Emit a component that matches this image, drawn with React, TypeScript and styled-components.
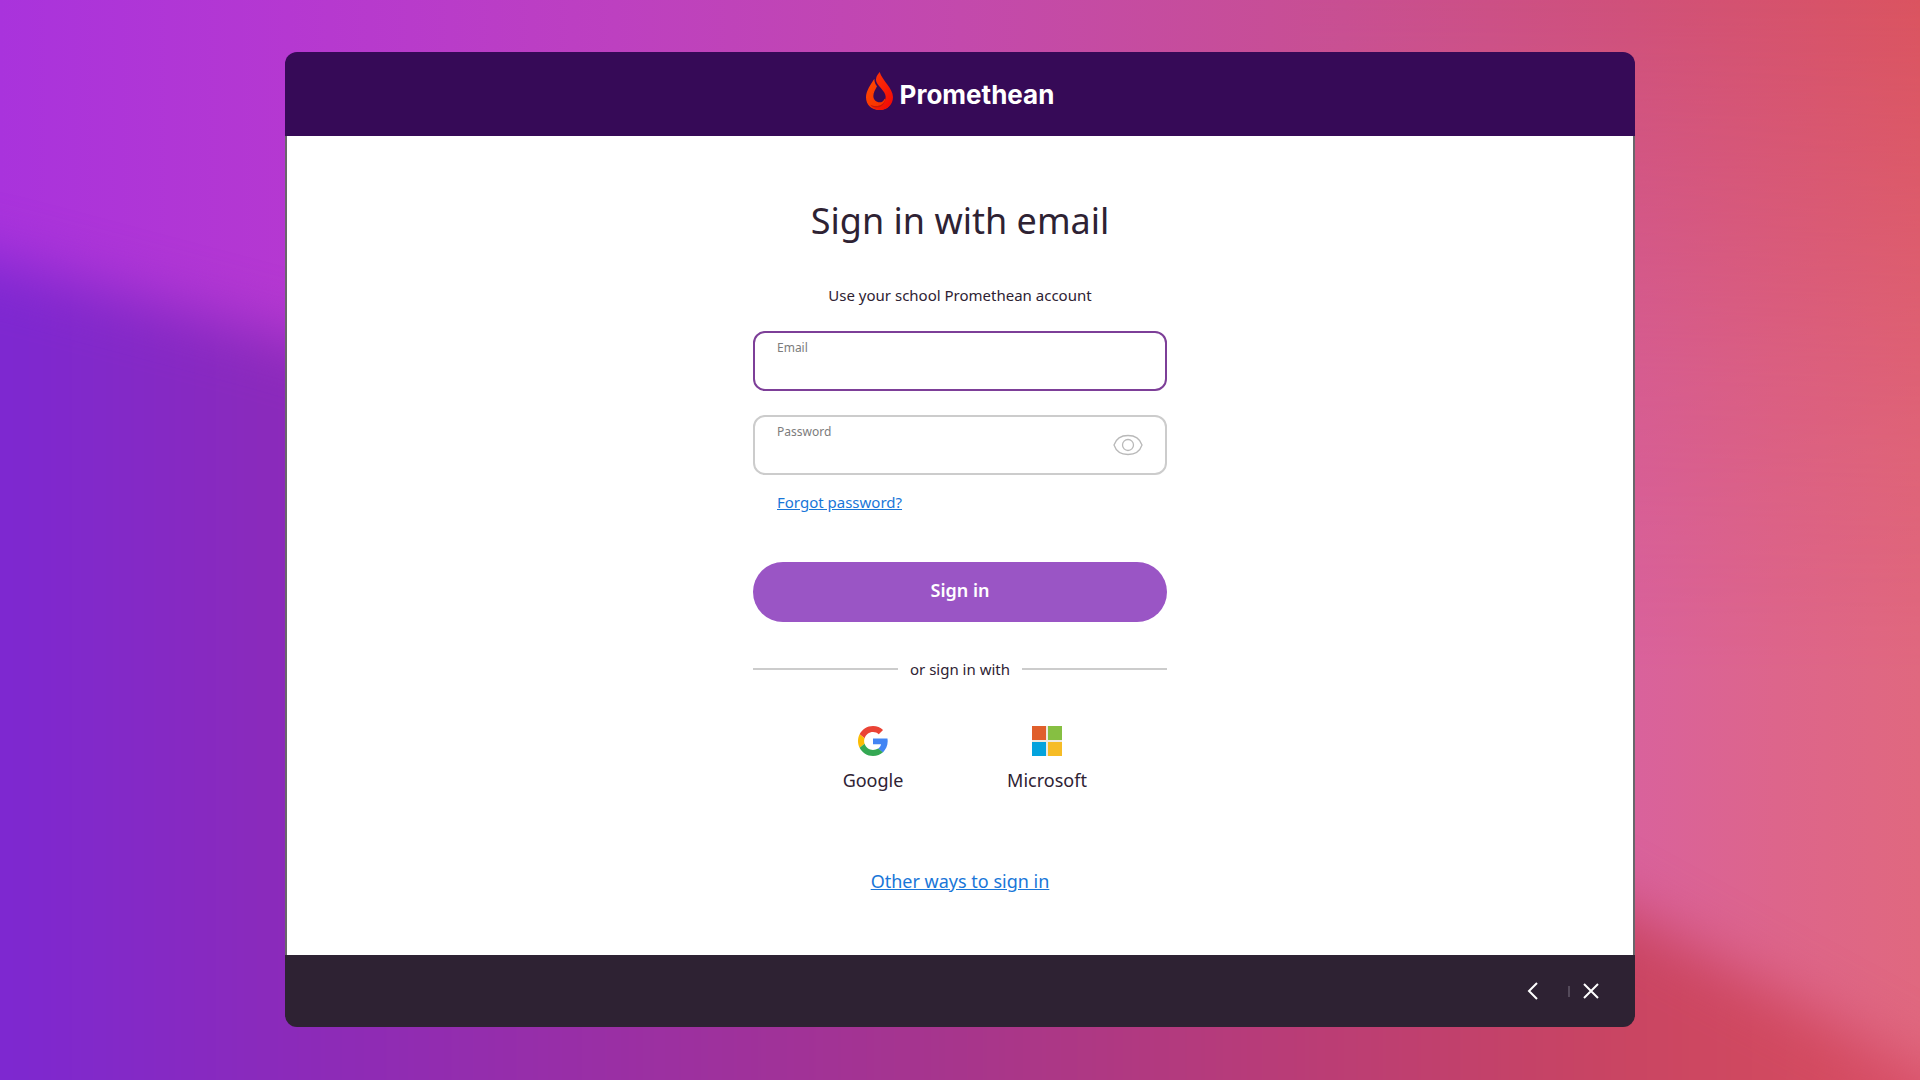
import React, { useState } from 'react';
import styled, { createGlobalStyle } from 'styled-components';

const GlobalStyle = createGlobalStyle`
  * { box-sizing: border-box; }
  body {
    margin: 0;
    font-family: 'Noto Sans', 'Open Sans', sans-serif;
    color: #2e2233;
  }
  button, input { font: inherit; }
`;

const Page = styled.div`
  position: relative;
  min-height: 100vh;
  padding: 52px 24px 53px;
  display: flex;
  justify-content: center;
  overflow: hidden;
  background: #a933dc;
`;

const Backdrop = styled.svg`
  position: absolute;
  inset: 0;
  width: 100%;
  height: 100%;
`;

const Window = styled.div`
  position: relative;
  width: 100%;
  max-width: 1350px;
  display: flex;
  flex-direction: column;
  border-radius: 12px;
  overflow: hidden;
`;

const Header = styled.header`
  height: 84px;
  padding-bottom: 6px;
  display: flex;
  align-items: center;
  justify-content: center;
  gap: 7px;
  background: #360a57;
`;

const Wordmark = styled.span`
  padding-top: 8px;
  color: #fff;
  font-family: Inter, sans-serif;
  font-size: 26px;
  font-weight: 700;
  line-height: 32px;
`;

const Main = styled.main`
  flex: 1;
  padding: 61px 24px 40px;
  display: flex;
  flex-direction: column;
  align-items: center;
  background: #fff;
  border: solid #69666b;
  border-width: 0 2px;
`;

const Title = styled.h1`
  margin: 0 0 40px;
  font-size: 36px;
  font-weight: 400;
  line-height: 48px;
`;

const Subtitle = styled.p`
  margin: 0 0 26px;
  font-size: 15px;
  line-height: 20px;
`;

const Form = styled.form`
  width: 100%;
  max-width: 414px;
  display: flex;
  flex-direction: column;
`;

const Field = styled.div`
  height: 60px;
  padding: 0 22px;
  display: flex;
  align-items: center;
  border: 2px solid #ccc;
  border-radius: 12px;
  & + & { margin-top: 24px; }
  &:focus-within { border-color: #7d3f98; }
`;

const EmailField = styled(Field)`
  border-color: #7d3f98;
`;

const FieldBody = styled.div`
  flex: 1;
  min-width: 0;
  padding-top: 6px;
  display: flex;
  flex-direction: column;
`;

const Label = styled.label`
  color: #7c7c7c;
  font-size: 12px;
  line-height: 16px;
`;

const Input = styled.input`
  width: 100%;
  height: 32px;
  padding: 0;
  border: 0;
  outline: 0;
  background: none;
  color: #2e2233;
  font-size: 18px;
`;

const IconButton = styled.button`
  padding: 0;
  display: flex;
  align-items: center;
  justify-content: center;
  border: 0;
  background: none;
  cursor: pointer;
`;

const Link = styled.a<{ $large?: boolean }>`
  color: #1976d8;
  font-size: ${(p) => (p.$large ? 18 : 15)}px;
  line-height: ${(p) => (p.$large ? 24 : 20)}px;
`;

const ForgotRow = styled.div`
  display: flex;
  padding: 17px 24px 50px;
`;

const Submit = styled.button`
  height: 60px;
  padding: 0 24px 4px;
  border: 0;
  border-radius: 30px;
  background: #9a55c5;
  color: #fff;
  font-size: 18px;
  font-weight: 600;
  line-height: 24px;
  cursor: pointer;
`;

const Divider = styled.div`
  margin: 36px 0 46px;
  display: flex;
  align-items: center;
  gap: 12px;
  font-size: 15px;
  line-height: 22px;
  &::before, &::after {
    content: '';
    flex: 1;
    height: 2px;
    background: #ccc;
  }
`;

const Providers = styled.div`
  margin-bottom: 77px;
  display: flex;
  justify-content: center;
`;

const Provider = styled.button`
  width: 174px;
  padding: 0;
  display: flex;
  flex-direction: column;
  align-items: center;
  gap: 12px;
  border: 0;
  background: none;
  color: inherit;
  font-size: 18px;
  line-height: 24px;
  cursor: pointer;
`;

const Footer = styled.footer`
  height: 72px;
  padding: 0 32px;
  display: flex;
  align-items: center;
  justify-content: flex-end;
  background: #2e2233;
`;

const FooterButton = styled(IconButton)`
  width: 24px;
  height: 24px;
`;

const Separator = styled.span`
  width: 2px;
  height: 11px;
  margin: 0 9px 0 24px;
  background: #544a5a;
`;

const Background = () => (
  <Backdrop viewBox="0 0 1920 1080" preserveAspectRatio="none" aria-hidden="true">
    <defs>
      <linearGradient id="sky">
        <stop offset="0" stopColor="#a933dc" />
        <stop offset="0.15" stopColor="#b538d1" />
        <stop offset="0.32" stopColor="#bd40c0" />
        <stop offset="0.5" stopColor="#c349ac" />
        <stop offset="0.7" stopColor="#c84f92" />
        <stop offset="0.85" stopColor="#d0517a" />
        <stop offset="1" stopColor="#db5460" />
      </linearGradient>
      <linearGradient id="glow" gradientUnits="userSpaceOnUse" x1="1635" y1="0" x2="1920" y2="0">
        <stop offset="0" stopColor="#d9629c" />
        <stop offset="0.5" stopColor="#dd658b" />
        <stop offset="1" stopColor="#e0687f" />
      </linearGradient>
      <linearGradient id="fade" x1="0" y1="0" x2="0" y2="1">
        <stop offset="0" stopColor="#000" />
        <stop offset="0.35" stopColor="#aaa" />
        <stop offset="0.62" stopColor="#fff" />
      </linearGradient>
      <mask id="glowMask">
        <rect x="1300" width="620" height="1080" fill="url(#fade)" />
      </mask>
      <linearGradient id="wave" gradientUnits="userSpaceOnUse" x1="0" y1="0" x2="1920" y2="0">
        <stop offset="0" stopColor="#7d28d1" />
        <stop offset="0.15" stopColor="#8b2aba" />
        <stop offset="0.32" stopColor="#9a2fa4" />
        <stop offset="0.5" stopColor="#a7358c" />
        <stop offset="0.67" stopColor="#b93c77" />
        <stop offset="0.83" stopColor="#c84463" />
        <stop offset="0.94" stopColor="#d24a5f" />
        <stop offset="1" stopColor="#d84e66" />
      </linearGradient>
      <filter id="soft" filterUnits="userSpaceOnUse" x="-200" y="0" width="2320" height="1300" colorInterpolationFilters="sRGB">
        <feGaussianBlur stdDeviation="28" />
      </filter>
    </defs>
    <rect width="1920" height="1080" fill="url(#sky)" />
    <rect x="1300" width="620" height="1080" fill="url(#glow)" mask="url(#glowMask)" />
    <path
      d="M-200 215 L0 262 L285 338 C700 470 1250 700 1635 915 L1920 1070 L2120 1180 V1300 H-200Z"
      fill="url(#wave)"
      filter="url(#soft)"
    />
  </Backdrop>
);

const Flame = () => (
  <svg width="27" height="38" viewBox="54 66 81 114" aria-hidden="true">
    <defs>
      <linearGradient id="flameLeft" x1="0" y1="0" x2="1" y2="1">
        <stop offset="0" stopColor="#ff4a00" />
        <stop offset="1" stopColor="#f52a00" />
      </linearGradient>
      <linearGradient id="flameRight" x1="0" y1="0" x2="1" y2="1">
        <stop offset="0" stopColor="#ff3a08" />
        <stop offset="1" stopColor="#f00505" />
      </linearGradient>
    </defs>
    <path
      d="M79 86 C68 104 54 122 54 142 C54 165 71 180 94 180 C108 180 119 175 126 164 L110 146 C107 153 101 157 95 157 C84 157 76 149 76 138 C76 128 82 119 87 109 C82 103 79 95 79 86Z"
      fill="url(#flameLeft)"
    />
    <path
      d="M95 66 C87 75 84 82 84 90 C84 106 113 122 113 140 C113 158 99 168 84 168 C77 168 71 166 67 164 C74 175 84 180 95 180 C118 180 135 164 135 141 C135 115 103 92 95 66Z"
      fill="url(#flameRight)"
    />
    <path
      d="M113 140 C113 158 99 168 84 168 C77 168 71 166 67 164 C72 171 80 173 90 172 C104 170 113 158 113 140Z"
      fill="#c81a08"
    />
  </svg>
);

const Eye = () => (
  <svg width="30" height="22" viewBox="0 0 30 22" fill="none" stroke="#b9b9b9" aria-hidden="true">
    <path d="M1 11 C3 5 8.500 1.500 15 1.500 S27 5 29 11 C27 17 21.500 20.500 15 20.500 S3 17 1 11Z" strokeWidth="1.300" />
    <circle cx="15" cy="11" r="5.500" strokeWidth="1.300" />
  </svg>
);

const GoogleLogo = () => (
  <svg width="30" height="30" viewBox="0 0 48 48" aria-hidden="true">
    <path fill="#EA4335" d="M24 9.500c3.540 0 6.710 1.220 9.210 3.600l6.850-6.850C35.900 2.380 30.470 0 24 0 14.620 0 6.510 5.380 2.560 13.220l7.980 6.190C12.430 13.720 17.740 9.500 24 9.500z" />
    <path fill="#4285F4" d="M47.500 24.550c0-1.570-.15-3.090-.38-4.550H24v9.020h12.940c-.58 2.960-2.260 5.480-4.780 7.180l7.730 6c4.510-4.180 7.610-10.360 7.610-17.650z" />
    <path fill="#FBBC05" d="M10.530 28.590c-.48-1.450-.76-2.990-.76-4.590s.27-3.140.76-4.590l-7.980-6.190C.92 16.460 0 20.120 0 24c0 3.880.92 7.540 2.560 10.780l7.970-6.190z" />
    <path fill="#34A853" d="M24 48c6.480 0 11.930-2.130 15.890-5.810l-7.730-6c-2.150 1.450-4.920 2.300-8.160 2.300-6.260 0-11.570-4.220-13.470-9.910l-7.980 6.190C6.510 42.620 14.620 48 24 48z" />
  </svg>
);

const MicrosoftLogo = () => (
  <svg width="30" height="30" viewBox="0 0 30 30" aria-hidden="true">
    <path fill="#eeeae0" d="M0 0h30v30H0z" />
    <path fill="#e05f2b" d="M0 0h14v14H0z" />
    <path fill="#86bf42" d="M16 0h14v14H16z" />
    <path fill="#04a3dd" d="M0 16h14v14H0z" />
    <path fill="#f6bc26" d="M16 16h14v14H16z" />
  </svg>
);

export default function App() {
  const [visible, setVisible] = useState(false);
  return (
    <Page>
      <GlobalStyle />
      <Background />
      <Window>
        <Header>
          <Flame />
          <Wordmark>Promethean</Wordmark>
        </Header>
        <Main>
          <Title>Sign in with email</Title>
          <Subtitle>Use your school Promethean account</Subtitle>
          <Form onSubmit={(e) => e.preventDefault()}>
            <EmailField>
              <FieldBody>
                <Label htmlFor="email">Email</Label>
                <Input id="email" type="email" />
              </FieldBody>
            </EmailField>
            <Field>
              <FieldBody>
                <Label htmlFor="password">Password</Label>
                <Input id="password" type={visible ? 'text' : 'password'} />
              </FieldBody>
              <IconButton type="button" aria-label="Show password" onClick={() => setVisible(!visible)}>
                <Eye />
              </IconButton>
            </Field>
            <ForgotRow>
              <Link href="#forgot">Forgot password?</Link>
            </ForgotRow>
            <Submit type="submit">Sign in</Submit>
            <Divider>or sign in with</Divider>
            <Providers>
              <Provider type="button">
                <GoogleLogo />
                Google
              </Provider>
              <Provider type="button">
                <MicrosoftLogo />
                Microsoft
              </Provider>
            </Providers>
          </Form>
          <Link $large href="#other">Other ways to sign in</Link>
        </Main>
        <Footer>
          <FooterButton type="button" aria-label="Back">
            <svg width="24" height="24" viewBox="0 0 24 24" fill="none" stroke="#fff" strokeWidth="2" aria-hidden="true">
              <path d="M17 4 L9 12 L17 20" />
            </svg>
          </FooterButton>
          <Separator />
          <FooterButton type="button" aria-label="Close">
            <svg width="24" height="24" viewBox="0 0 24 24" fill="none" stroke="#fff" strokeWidth="2" aria-hidden="true">
              <path d="M5 5 L19 19 M19 5 L5 19" />
            </svg>
          </FooterButton>
        </Footer>
      </Window>
    </Page>
  );
}
